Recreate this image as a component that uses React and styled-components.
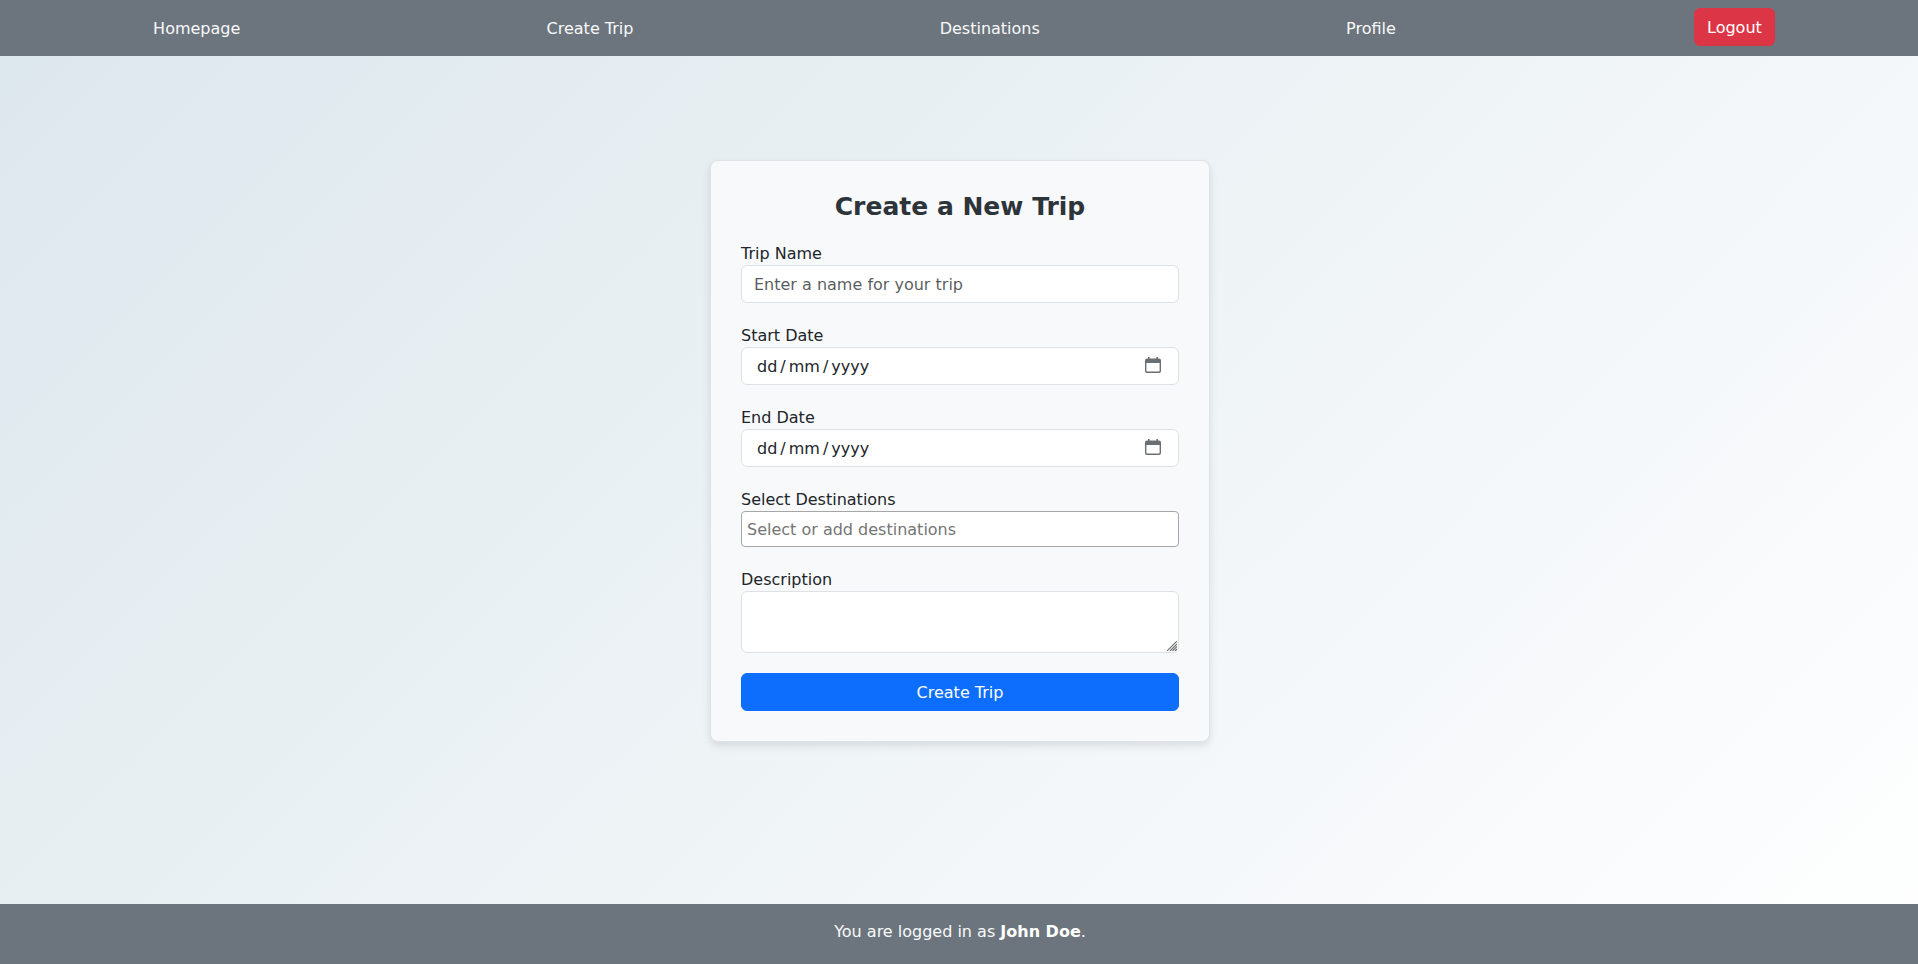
import React from "react";
import styled, { createGlobalStyle } from "styled-components";

const GlobalStyle = createGlobalStyle`
  *, *::before, *::after { box-sizing: border-box; }
  body {
    margin: 0;
    overflow: hidden;
    font-family: "DejaVu Sans", sans-serif;
    font-size: 16px;
    line-height: 24px;
    color: #212529;
  }
`;

const Page = styled.div`
  display: flex;
  flex-direction: column;
  width: 1920px;
  min-height: 100vh;
  background: linear-gradient(135deg, #dce7ed 0%, #ffffff 100%);
`;

const Navbar = styled.nav`
  background: #6c757d;
  padding: 8px 0;
`;

const NavList = styled.ul`
  display: flex;
  justify-content: space-around;
  list-style: none;
  margin: 0;
  padding: 0;
`;

const NavLink = styled.a`
  display: block;
  padding: 9px 8px 7px;
  color: #f8f9fa;
  text-decoration: none;
`;

const Button = styled.button`
  display: ${(p) => (p.$block ? "block" : "inline-block")};
  width: ${(p) => (p.$block ? "100%" : "auto")};
  height: 38px;
  padding: 7px 12px 5px;
  border: 1px solid ${(p) => p.$color};
  border-radius: 6px;
  background: ${(p) => p.$color};
  color: #fff;
  font: inherit;
  vertical-align: top;
  cursor: pointer;
`;

const Main = styled.main`
  flex: 1;
  padding: 104px 0 0;
`;

const Card = styled.form`
  width: 500px;
  margin: 0 auto;
  padding: 30px;
  background: #f8f9fb;
  border: 1px solid #dee2e6;
  border-radius: 8px;
  box-shadow: 0 4px 8px rgba(0, 0, 0, 0.1);
`;

const Title = styled.h2`
  height: 30px;
  margin: 0 0 20px;
  font-size: 25px;
  font-weight: 700;
  line-height: 32px;
  text-align: center;
  color: #2d343a;
`;

const Field = styled.div`
  margin-bottom: 20px;
`;

const Label = styled.label`
  display: block;
  height: 24px;
  line-height: 26px;
`;

const Input = styled.input`
  display: block;
  width: 100%;
  height: 38px;
  padding: 6px 12px;
  border: 1px solid #dee2e6;
  border-radius: 6px;
  background: #fff;
  color: #212529;
  font: inherit;
  &::placeholder { color: rgba(33, 37, 41, 0.75); opacity: 1; }
`;

const DateBox = styled.div`
  display: flex;
  align-items: center;
  gap: 3px;
  height: 38px;
  padding: 1px 17px 0 15px;
  border: 1px solid #dee2e6;
  border-radius: 6px;
  background: #fff;
`;

const CalendarIcon = styled.svg`
  width: 16px;
  height: 16px;
  margin: 0 0 3px auto;
`;

const TagInput = styled.input`
  display: block;
  width: 100%;
  height: 36px;
  padding: 5px;
  border: 1px solid #a6a6a6;
  border-radius: 4px;
  background: #fff;
  font: inherit;
  &::placeholder { color: #757575; opacity: 1; }
`;

const TextAreaWrap = styled.div`
  position: relative;
`;

const TextArea = styled.textarea`
  display: block;
  width: 100%;
  height: 62px;
  padding: 6px 12px;
  border: 1px solid #dee2e6;
  border-radius: 6px;
  background: #fff;
  font: inherit;
  resize: none;
`;

const ResizeGrip = styled.svg`
  position: absolute;
  right: 2px;
  bottom: 2px;
  width: 10px;
  height: 10px;
  pointer-events: none;
`;

const Footer = styled.footer`
  height: 60px;
  padding-top: 16px;
  background: #6c757d;
  color: #f8f9fa;
  text-align: center;
  strong { font-weight: 700; color: #fff; }
`;

const links = ["Homepage", "Create Trip", "Destinations", "Profile"];

function DateInput() {
  return (
    <DateBox>
      <span>dd</span>
      <span>/</span>
      <span>mm</span>
      <span>/</span>
      <span>yyyy</span>
      <CalendarIcon viewBox="0 0 16 16" fill="#6a6f73">
        <path
          fillRule="evenodd"
          d="M3 0h1.6v1.5h6.8V0H13v1.5h1a2 2 0 0 1 2 2V14a2 2 0 0 1-2 2H2a2 2 0 0 1-2-2V3.500a2 2 0 0 1 2-2h1zM1.400 6v7.800a.8.8 0 0 0 .8.8h11.600a.8.8 0 0 0 .8-.8V6z"
        />
      </CalendarIcon>
    </DateBox>
  );
}

export default function App() {
  return (
    <Page>
      <GlobalStyle />
      <Navbar>
        <NavList>
          {links.map((l) => (
            <li key={l}><NavLink href="#">{l}</NavLink></li>
          ))}
          <li><Button type="button" $color="#dc3545">Logout</Button></li>
        </NavList>
      </Navbar>
      <Main>
        <Card>
          <Title>Create a New Trip</Title>
          <Field>
            <Label>Trip Name</Label>
            <Input placeholder="Enter a name for your trip" />
          </Field>
          <Field>
            <Label>Start Date</Label>
            <DateInput />
          </Field>
          <Field>
            <Label>End Date</Label>
            <DateInput />
          </Field>
          <Field>
            <Label>Select Destinations</Label>
            <TagInput placeholder="Select or add destinations" />
          </Field>
          <Field>
            <Label>Description</Label>
            <TextAreaWrap>
              <TextArea />
              <ResizeGrip viewBox="0 0 10 10" stroke="#6b6b6b" strokeWidth="1.1">
                <path d="M0 10L10 0M3 10L10 3M5.500 10L10 5.500M8 10L10 8" />
              </ResizeGrip>
            </TextAreaWrap>
          </Field>
          <Button type="button" $block $color="#0d6efd">Create Trip</Button>
        </Card>
      </Main>
      <Footer>
        You are logged in as <strong>John Doe</strong>.
      </Footer>
    </Page>
  );
}
